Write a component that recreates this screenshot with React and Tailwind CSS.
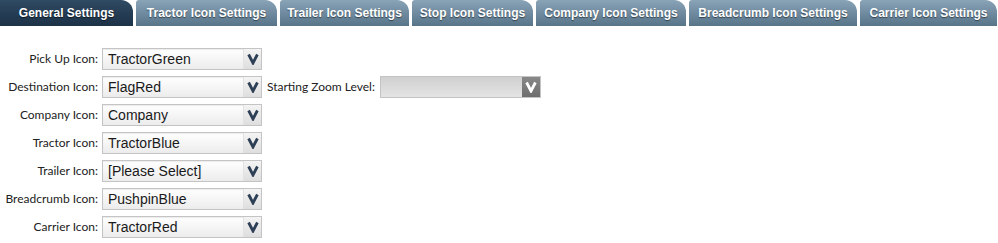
import React from "react";

const tabs = [
  { label: "General Settings", w: "w-[133px]", active: true },
  { label: "Tractor Icon Settings", w: "w-[141px]" },
  { label: "Trailer Icon Settings", w: "w-[129px]" },
  { label: "Stop Icon Settings", w: "w-[121px]" },
  { label: "Company Icon Settings", w: "w-[150px]" },
  { label: "Breadcrumb Icon Settings", w: "w-[168px]" },
  { label: "Carrier Icon Settings", w: "w-[137px]" },
];

const rows = [
  ["Pick Up Icon:", "TractorGreen"],
  ["Destination Icon:", "FlagRed"],
  ["Company Icon:", "Company"],
  ["Tractor Icon:", "TractorBlue"],
  ["Trailer Icon:", "[Please Select]"],
  ["Breadcrumb Icon:", "PushpinBlue"],
  ["Carrier Icon:", "TractorRed"],
];

function Chevron({ color }) {
  return (
    <svg width="12" height="12" viewBox="0 0 12 12">
      <path d="M1.6 1.5 L6 10 L10.4 1.5" fill="none" stroke={color} strokeWidth="2.8" strokeLinejoin="miter" />
    </svg>
  );
}

function Select({ value }) {
  return (
    <div className="flex h-[22px] w-[160px] shrink-0 border border-[#c4c4c4] bg-gradient-to-b from-white to-[#ececec] shadow-[inset_0_1px_1px_rgba(0,0,0,0.08)]">
      <div className="flex-1 pl-[5px] text-[14px] leading-[20px] text-[#1a1a1a] font-['Liberation_Sans',Arial,sans-serif] whitespace-nowrap">
        {value}
      </div>
      <div className="flex w-[18px] items-center justify-center border-l border-[#e2e2e2] bg-gradient-to-b from-[#f4f4f4] to-[#dedede]">
        <Chevron color="#2c3f55" />
      </div>
    </div>
  );
}

export default function App() {
  return (
    <div className="w-[998px] h-[243px] bg-white overflow-hidden">
      <div className="flex gap-[3px] h-[26px]">
        {tabs.map((t) => (
          <div
            key={t.label}
            className={
              t.active
                ? `${t.w} shrink-0 flex items-center justify-center rounded-tr-[12px] bg-gradient-to-b from-[#2f4a63] to-[#1c3247] text-white text-[12px] font-bold font-['Liberation_Sans',Arial,sans-serif] [text-shadow:0_1px_1px_rgba(0,0,0,0.6)]`
                : `${t.w} shrink-0 flex items-center justify-center rounded-tr-[12px] rounded-tl-[3px] bg-gradient-to-b from-[#89a3b7] to-[#587489] text-white text-[12px] font-bold font-['Liberation_Sans',Arial,sans-serif] [text-shadow:0_1px_1px_rgba(0,0,0,0.5)]`
            }
          >
            {t.label}
          </div>
        ))}
      </div>
      <div className="flex flex-col gap-[6px] pt-[22px] font-['Lato',sans-serif] text-[12px] text-[#222]">
        {rows.map(([label, value], i) => (
          <div key={label} className="flex items-center h-[22px]">
            <div className="w-[102px] shrink-0 text-right pr-[4px] leading-none whitespace-nowrap">{label}</div>
            <Select value={value} />
            {i === 1 && (
              <div className="flex items-center">
                <div className="ml-[5px] mr-[5px] leading-none whitespace-nowrap">Starting Zoom Level:</div>
                <div className="flex h-[22px] w-[161px] border border-[#c4c4c4] bg-gradient-to-b from-[#d0d0d0] to-[#e4e4e4]">
                  <div className="flex-1" />
                  <div className="flex w-[18px] items-center justify-center bg-gradient-to-b from-[#888] to-[#6e6e6e]">
                    <Chevron color="#ffffff" />
                  </div>
                </div>
              </div>
            )}
          </div>
        ))}
      </div>
    </div>
  );
}
